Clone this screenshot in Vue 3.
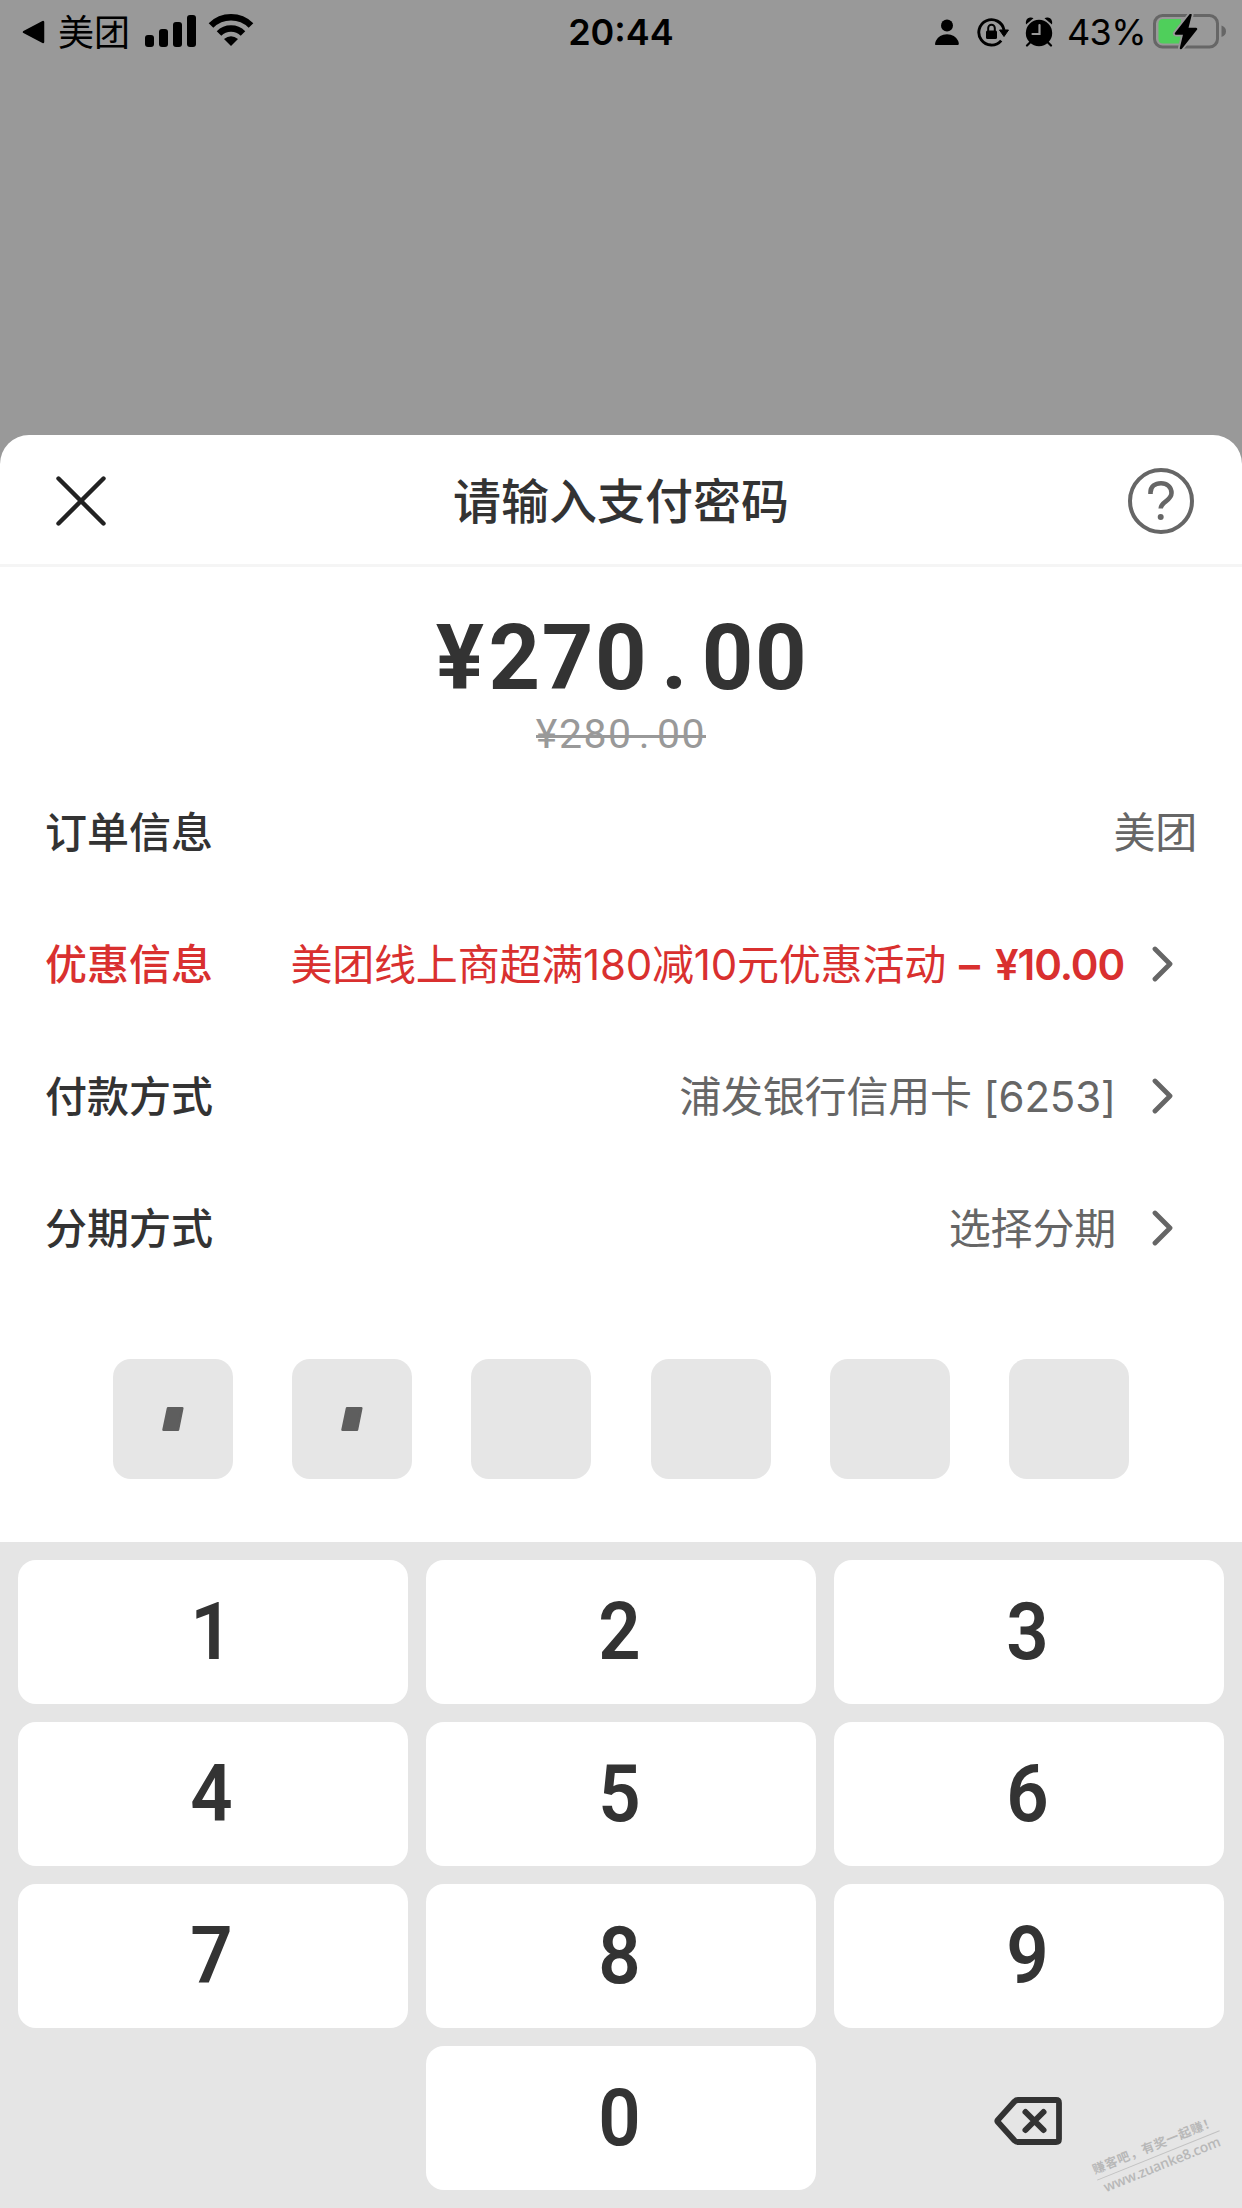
<script setup>
const rows = [
  { label: '订单信息', value: '美团' },
  { label: '优惠信息', value: '美团线上商超满180减10元优惠活动', amount: '¥10.00', promo: true, link: true },
  { label: '付款方式', value: '浦发银行信用卡 [6253]', link: true },
  { label: '分期方式', value: '选择分期', link: true },
]
const entered = 2
const keys = ['1', '2', '3', '4', '5', '6', '7', '8', '9', '', '0', 'del']
</script>

<template>
  <div class="screen">
    <div class="status">
      <div class="status-left">
        <svg class="back" width="23" height="24" viewBox="0 0 23 24"><path d="M2 12 L21 2 V22 Z" fill="#000" stroke="#000" stroke-width="2.5" stroke-linejoin="round" /></svg>
        <span class="carrier">美团</span>
        <svg class="signal" width="51" height="32" viewBox="0 0 51 32">
          <rect x="0" y="20" width="9" height="12" rx="3" />
          <rect x="14" y="14" width="9" height="18" rx="3" />
          <rect x="28" y="7" width="9" height="25" rx="3" />
          <rect x="42" y="0" width="9" height="32" rx="3" />
        </svg>
        <svg class="wifi" width="46" height="34" viewBox="0 0 46 34">
          <path d="M3 12.5 A28.5 28.5 0 0 1 43 12.5" fill="none" stroke="#000" stroke-width="6.6" />
          <path d="M11 20.5 A17 17 0 0 1 35 20.5" fill="none" stroke="#000" stroke-width="6.4" />
          <path d="M23 33 L16 26 Q23 20.5 30 26 Z" />
        </svg>
      </div>
      <span class="time">20:44</span>
      <div class="status-right">
        <svg class="person" width="24" height="26" viewBox="0 0 24 26"><circle cx="12" cy="6.5" r="6" /><path d="M0.5 26 Q-.5 25.5 .8 22 Q4 15.2 12 15.2 Q20 15.2 23.2 22 Q24.5 25.5 23 26 Z" /></svg>
        <svg class="rotation" width="32" height="30" viewBox="0 0 32 30">
          <path d="M24.2 23.6 A12.7 12.7 0 1 1 27 13" fill="none" stroke="#000" stroke-width="2.9" />
          <path d="M22.5 13 H31.5 L27 19.5 Z" stroke="#000" stroke-linejoin="round" />
          <rect x="9" y="13.5" width="11" height="8.5" rx="1.5" />
          <path d="M11.2 14 V11 A3.3 3.3 0 0 1 17.8 11 V14" fill="none" stroke="#000" stroke-width="2" />
        </svg>
        <svg class="alarm" width="28" height="30" viewBox="0 0 28 30">
          <circle cx="14" cy="16" r="13.2" />
          <path d="M1 7.5 Q0 1.5 5 .5 Q7 .2 8.5 1.2 Z M27 7.5 Q28 1.5 23 .5 Q21 .2 19.5 1.2 Z" />
          <path d="M5.5 25 L2 28.5 M22.5 25 L26 28.5" stroke="#000" stroke-width="2.2" stroke-linecap="round" />
          <path d="M14.5 8 V17 H7.5" fill="none" stroke="#999" stroke-width="2.2" stroke-linecap="round" />
        </svg>
        <span class="percent">43%</span>
        <svg class="battery" width="74" height="36" viewBox="0 0 74 36">
          <rect x="1.5" y="1.5" width="63" height="31.5" rx="8" fill="none" stroke="#666" stroke-width="3" />
          <path d="M68.5 11.5 Q73 13 73 17.3 Q73 21.5 68.5 23 Z" fill="#666" />
          <path d="M10 5 H28 V29.5 H10 Q5.5 29.5 5.5 25 V9.5 Q5.5 5 10 5 Z" fill="#4fcf5b" />
          <path d="M37.5 1 L23 19.5 H31.5 L28 34 L43 15 H34 Z" stroke="#999" stroke-width="6" stroke-linejoin="round" />
          <path d="M37.5 1 L23 19.5 H31.5 L28 34 L43 15 H34 Z" stroke="#000" stroke-width="2.4" stroke-linejoin="round" />
        </svg>
      </div>
    </div>

    <main class="sheet">
      <header class="header">
        <svg class="close" width="50" height="50" viewBox="0 0 50 50"><path d="M2.5 2.5 L47.5 47.5 M47.5 2.5 L2.5 47.5" stroke="#222" stroke-width="4.4" stroke-linecap="round" /></svg>
        <h1 class="title">请输入支付密码</h1>
        <svg class="help" width="66" height="66" viewBox="0 0 66 66" fill="none" stroke="#666">
          <circle cx="33" cy="33" r="31" stroke-width="4" />
          <path d="M22.5 26 V24.5 C22.5 18.5 27 15.2 33 15.2 C39 15.2 43.5 19 43.5 25 C43.5 33 32.7 33.5 32.7 40.5" stroke-width="4.6" />
          <circle cx="32.7" cy="49" r="3" fill="#666" stroke="none" />
        </svg>
      </header>

      <div class="amount"><span class="yen">¥</span>270<span class="dot">.</span>00</div>
      <div class="original"><span class="strike">¥280<span class="dot">.</span>00</span></div>

      <div class="rows">
        <div v-for="row in rows" :key="row.label" class="row" :class="{ promo: row.promo, linked: row.link }">
          <span class="label">{{ row.label }}</span>
          <span class="value">{{ row.value }}</span>
          <template v-if="row.amount">
            <span class="minus">–</span>
            <span class="discount">{{ row.amount }}</span>
          </template>
          <svg v-if="row.link" class="chevron" width="22" height="36" viewBox="0 0 22 36"><path d="M3 3 L18 18 L3 33" fill="none" stroke="#666" stroke-width="4.8" stroke-linecap="round" stroke-linejoin="round" /></svg>
        </div>
      </div>

      <div class="pin">
        <div v-for="n in 6" :key="n" class="cell">
          <svg v-if="n <= entered" width="22" height="24" viewBox="0 0 22 24"><path d="M6 1.3 H20.3 L16 22.7 H1.5 Z" fill="#5e5e5e" stroke="#5e5e5e" stroke-width="2.5" stroke-linejoin="round" /></svg>
        </div>
      </div>

      <div class="keyboard">
        <div v-for="(k, i) in keys" :key="i" class="key" :class="{ plain: k === '' || k === 'del' }">
          <svg v-if="k === 'del'" class="delete" width="68" height="48" viewBox="0 0 68 48" fill="none" stroke="#333" stroke-linecap="round" stroke-linejoin="round">
            <path d="M24 3 H62 Q65 3 65 6 V42 Q65 45 62 45 H24 Q22 45 20.5 43.5 L3.6 24.8 Q3 24 3.6 23.2 L20.5 4.5 Q22 3 24 3 Z" stroke-width="5.8" />
            <path d="M31.5 15 L49.5 33 M49.5 15 L31.5 33" stroke-width="6" />
          </svg>
          <span v-else class="digit">{{ k }}</span>
        </div>
      </div>
    </main>

    <div class="watermark">
      <span class="wm-slogan">赚客吧，有奖一起赚！</span>
      <span class="wm-url">www.zuanke8.com</span>
    </div>
  </div>
</template>

<style>
body {
  margin: 0;
}
</style>

<style scoped>
.screen {
  position: relative;
  width: 1242px;
  height: 2208px;
  overflow: hidden;
  background: #999;
  font-family: Inter, "Noto Sans CJK SC", sans-serif;
  color: #333;
}
svg {
  display: block;
  flex: none;
}
.status {
  display: grid;
  grid-template-columns: 1fr auto 1fr;
  align-items: center;
  height: 62px;
  margin-bottom: 373px;
  color: #000;
  font-size: 36px;
  line-height: 62px;
}
.status-left,
.status-right {
  display: flex;
  align-items: center;
}
.status-left {
  padding-left: 22px;
}
.carrier {
  margin-left: 13px;
  padding-top: 2px;
  line-height: 60px;
}
.signal {
  margin-left: 15px;
  margin-top: -2px;
}
.wifi {
  margin-left: 12px;
  margin-top: -3px;
}
.time {
  padding-top: 1px;
  font-weight: 600;
  letter-spacing: 0;
}
.status-right {
  justify-content: flex-end;
  padding-right: 15px;
}
.rotation {
  margin-left: 18px;
}
.alarm {
  margin-left: 16px;
}
.percent {
  margin-left: 14px;
  letter-spacing: -0.6px;
}
.battery {
  margin-left: 7px;
}
.sheet {
  height: 1773px;
  overflow: hidden;
  background: #fff;
  border-radius: 29px 29px 0 0;
}
.header {
  display: flex;
  align-items: center;
  justify-content: space-between;
  height: 127px;
  padding: 2px 48px 0 56px;
  border-bottom: 3px solid #f5f5f5;
}
.title {
  margin: 0;
  padding: 0 0 5px 8px;
  font-size: 48px;
  font-weight: 500;
}
.amount {
  margin-top: 47px;
  height: 90px;
  padding-left: 2px;
  line-height: 90px;
  text-align: center;
  font-family: Roboto, sans-serif;
  font-size: 90px;
  font-weight: 700;
  letter-spacing: 1.6px;
}
.yen {
  margin-right: 3px;
}
.dot {
  display: inline-block;
  text-align: center;
}
.amount .dot {
  width: 53.5px;
}
.original {
  display: flex;
  justify-content: center;
  margin-top: 8px;
  height: 44px;
  margin-bottom: 11px;
  line-height: 44px;
  font-family: Roboto, sans-serif;
  font-size: 41px;
  color: #999;
}
.strike {
  letter-spacing: 1.5px;
  background: linear-gradient(#999, #999) 0 23px / 100% 3px no-repeat;
}
.original .dot {
  width: 24.5px;
}
.row {
  display: flex;
  align-items: center;
  height: 132px;
  padding: 0 45px;
  font-size: 42px;
  line-height: 60px;
  white-space: nowrap;
}
.row.linked {
  padding-right: 68px;
}
.label {
  font-weight: 500;
  margin-right: auto;
}
.value {
  color: #666;
  letter-spacing: -0.2px;
}
.chevron {
  margin-left: 36px;
  margin-top: -2px;
}
.promo .label,
.promo .value,
.minus,
.discount {
  color: #d9302f;
}
.minus,
.discount {
  font-weight: 600;
}
.minus {
  margin-left: 13px;
}
.discount {
  margin-left: 15px;
  letter-spacing: -1.1px;
}
.promo .chevron {
  margin-left: 28px;
}
.pin {
  display: flex;
  justify-content: space-between;
  margin: 64px 113px 0;
}
.cell {
  display: flex;
  align-items: center;
  justify-content: center;
  width: 120px;
  height: 120px;
  border-radius: 18px;
  background: #e6e6e6;
}
.keyboard {
  display: grid;
  grid-template-columns: repeat(3, 390px);
  grid-auto-rows: 144px;
  gap: 18px;
  margin-top: 63px;
  padding: 18px;
  background: #e5e5e5;
}
.key {
  display: flex;
  align-items: center;
  justify-content: center;
  border-radius: 18px;
  background: #fff;
}
.key.plain {
  background: none;
}
.digit {
  margin-right: 2px;
  font-family: Roboto, sans-serif;
  font-size: 79px;
  font-weight: 600;
  transform: scaleX(0.94);
}
.delete {
  margin-top: 6px;
  margin-right: 2px;
}
.watermark {
  position: absolute;
  left: 1087px;
  top: 2135px;
  width: 142px;
  display: flex;
  flex-direction: column;
  align-items: center;
  transform: rotate(-22deg);
  color: #b8b8b8;
  white-space: nowrap;
}
.wm-slogan {
  border-bottom: 1px solid #c2c2c2;
  font-size: 12.5px;
  font-weight: 700;
  letter-spacing: 0.7px;
  line-height: 20px;
}
.wm-url {
  font-family: "Open Sans", sans-serif;
  font-size: 14px;
  font-weight: 600;
  letter-spacing: -0.2px;
  line-height: 18px;
}
</style>
